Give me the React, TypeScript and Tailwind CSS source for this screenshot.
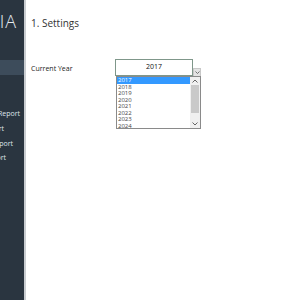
const years = ["2017", "2018", "2019", "2020", "2021", "2022", "2023", "2024"];

const Sidebar = () => {
  return (
    <div className="w-[24px] h-full shrink-0 overflow-hidden bg-[#2a3540] flex flex-col">
      <div className="h-[60px] flex justify-end items-start pt-[11px]">
        <span className="shrink-0 text-[18px] leading-[20px] text-[#e6ecf0] font-light tracking-[1px] pr-[7px]">
          ARMONIA
        </span>
      </div>
      <div className="h-[15px] bg-[#3d4c5b]"></div>
      <div className="flex flex-col items-end text-[7px] text-[#dfe5ea] pt-[34px]">
        <span className="shrink-0 h-[15px] pr-[4px] whitespace-nowrap">Monthly Report</span>
        <span className="shrink-0 h-[15px] pr-[20px] whitespace-nowrap">Chart</span>
        <span className="shrink-0 h-[14px] pr-[11px] whitespace-nowrap">Yearly Report</span>
        <span className="shrink-0 h-[14px] pr-[18px] whitespace-nowrap">Export</span>
      </div>
    </div>
  );
};

export default function App() {
  return (
    <div
      className="w-[300px] h-[300px] flex bg-white overflow-hidden"
      style={{ fontFamily: "'Open Sans', 'Liberation Sans', sans-serif" }}
    >
      <Sidebar />
      <div className="w-[2px] h-full bg-[#c9cdd1]"></div>
      <div className="flex-1 flex flex-col pl-[5px]">
        <div className="pt-[16px] text-[10px] leading-[14px] text-[#333]">1. Settings</div>
        <div className="flex mt-[29px]">
          <div className="w-[84px] pt-[5px] text-[7px] text-[#222]">Current Year</div>
          <div className="flex flex-col">
            <div className="flex items-end">
              <div className="w-[78px] h-[17px] border border-[#7f978a] flex items-center justify-center text-[7px] text-[#111]">
                2017
              </div>
              <div className="w-[8px] h-[9px] border border-[#c8c8c8] bg-[#e4e4e4] flex items-center justify-center mb-[-1px]">
                <svg width="5" height="3" viewBox="0 0 5 3">
                  <path d="M0.5 0.5 L2.5 2.5 L4.5 0.5" fill="none" stroke="#555" strokeWidth="0.8" />
                </svg>
              </div>
            </div>
            <div className="ml-[1px] w-[85px] h-[53px] border border-[#8a8a8a] flex bg-white">
              <div className="flex-1 flex flex-col text-[6px] leading-[6.5px] text-[#444]">
                {years.map((y, i) => (
                  <div
                    key={y}
                    className={i === 0 ? "bg-[#3399ff] text-white pl-[1px]" : "pl-[1px]"}
                  >
                    {y}
                  </div>
                ))}
              </div>
              <div className="w-[10px] flex flex-col bg-[#f0f0f0]">
                <div className="h-[8px] flex items-center justify-center">
                  <svg width="6" height="4" viewBox="0 0 6 4">
                    <path d="M0.5 3.5 L3 1 L5.5 3.5" fill="none" stroke="#555" strokeWidth="0.9" />
                  </svg>
                </div>
                <div className="h-[28px] mx-[1px] bg-[#c9c9c9]"></div>
                <div className="flex-1"></div>
                <div className="h-[8px] flex items-center justify-center">
                  <svg width="6" height="4" viewBox="0 0 6 4">
                    <path d="M0.5 0.5 L3 3 L5.5 0.5" fill="none" stroke="#555" strokeWidth="0.9" />
                  </svg>
                </div>
              </div>
            </div>
          </div>
        </div>
      </div>
    </div>
  );
}
